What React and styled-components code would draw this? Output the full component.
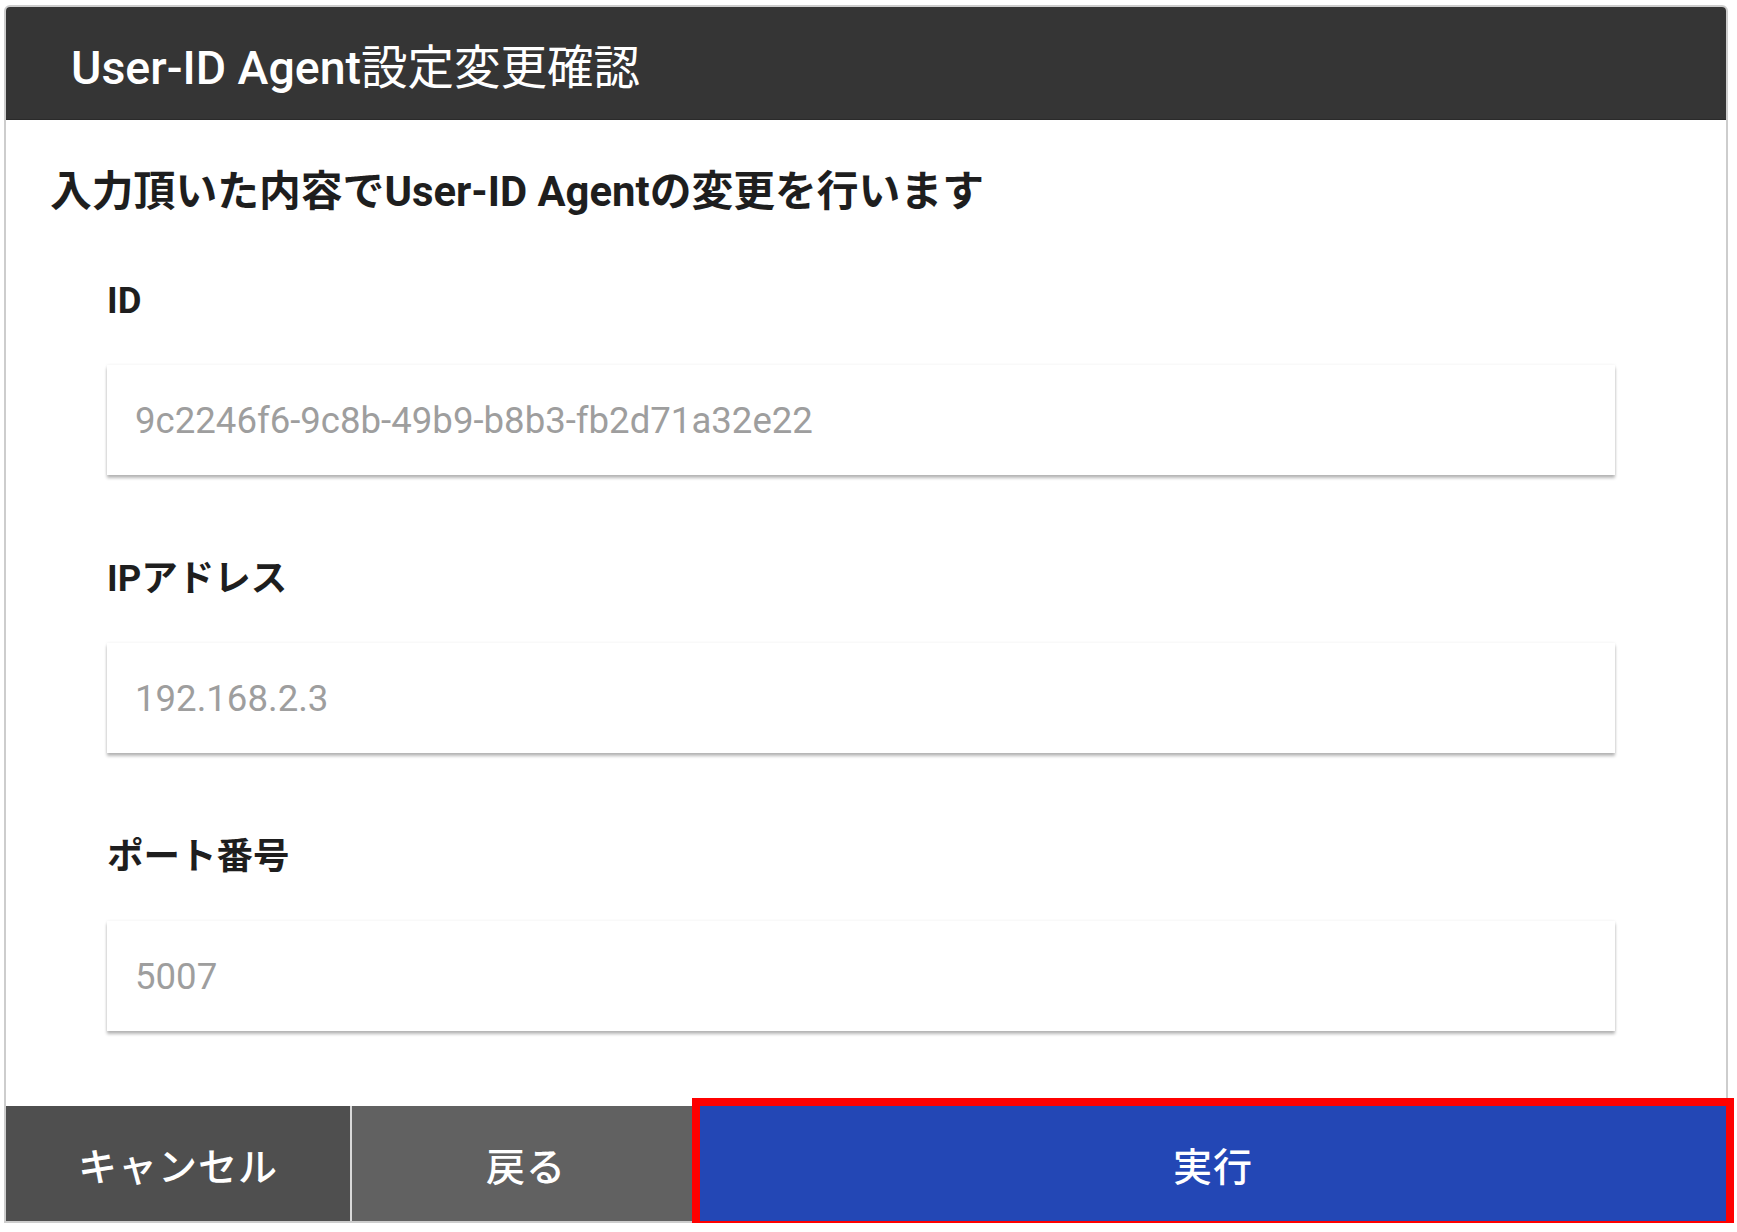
import React from "react";
import styled, { createGlobalStyle } from "styled-components";

const Global = createGlobalStyle`
  html, body {
    margin: 0;
    padding: 0;
    background: #ffffff;
  }
  body {
    font-family: Roboto, "Noto Sans CJK JP", "Noto Sans", sans-serif;
  }
  * { box-sizing: border-box; }
`;

const Frame = styled.div`
  margin: 5px 0 0 4px;
  width: 1724px;
  border: 2px solid #cdcdcd;
  border-radius: 6px 6px 0 0;
  display: flex;
  flex-direction: column;
  background: #ffffff;
`;

const Header = styled.header`
  height: 113px;
  background: #353535;
  border-radius: 4px 4px 0 0;
  display: flex;
  align-items: center;
  padding: 10px 0 0 65px;
  border-bottom: 1px solid #2a2a2a;
`;

const Title = styled.h1`
  margin: 0;
  color: #ffffff;
  font-size: 46.5px;
  font-weight: 400;
  line-height: 54px;
  letter-spacing: 0;
`;

const TitleLatin = styled.span`
  font-weight: 500;
`;

const Body = styled.main`
  height: 986px;
  display: flex;
  flex-direction: column;
  padding: 48px 111px 0 44px;
`;

const Lead = styled.p`
  margin: 0 0 63px 0;
  font-size: 41.8px;
  line-height: 48px;
  font-weight: 700;
  color: #1e1e1e;
`;

const Fields = styled.div`
  display: flex;
  flex-direction: column;
  gap: 82px;
  padding-left: 57px;
`;

const Field = styled.div`
  display: flex;
  flex-direction: column;
  gap: 42px;
`;

const Label = styled.div`
  font-size: 36.5px;
  line-height: 44px;
  font-weight: 700;
  color: #1e1e1e;
`;

const ValueBox = styled.div`
  height: 110px;
  background: #ffffff;
  display: flex;
  align-items: center;
  padding-left: 28px;
  font-size: 36.6px;
  color: #9e9e9e;
  box-shadow: 0 3px 3px rgba(0, 0, 0, 0.28), 0 0 3px rgba(0, 0, 0, 0.07);
`;

const Footer = styled.footer`
  height: 115px;
  display: flex;
  background: #ffffff;
`;

const FooterButton = styled.button`
  border: none;
  margin: 0;
  padding: 0;
  font-family: inherit;
  font-size: 39px;
  font-weight: 500;
  color: #ffffff;
  letter-spacing: 1px;
  display: flex;
  align-items: center;
  justify-content: center;
  cursor: pointer;
  width: ${(p) => (p.$width ? `${p.$width}px` : "auto")};
  flex: ${(p) => (p.$grow ? 1 : "none")};
  background: ${(p) => p.$bg};
  border-left: ${(p) => (p.$divider ? "2px solid #d9d9d9" : "none")};
  outline: ${(p) => (p.$highlight ? "8px solid #ff0000" : "none")};
  outline-offset: 0;
  position: relative;
`;

const fields = [
  { label: "ID", value: "9c2246f6-9c8b-49b9-b8b3-fb2d71a32e22" },
  { label: "IPアドレス", value: "192.168.2.3" },
  { label: "ポート番号", value: "5007" },
];

export default function App() {
  return (
    <>
      <Global />
      <Frame>
        <Header>
          <Title>
            <TitleLatin>User-ID Agent</TitleLatin>設定変更確認
          </Title>
        </Header>
        <Body>
          <Lead>入力頂いた内容でUser-ID Agentの変更を行います</Lead>
          <Fields>
            {fields.map((f) => (
              <Field key={f.label}>
                <Label>{f.label}</Label>
                <ValueBox>{f.value}</ValueBox>
              </Field>
            ))}
          </Fields>
        </Body>
        <Footer>
          <FooterButton $width={344} $bg="#4f4f4f">キャンセル</FooterButton>
          <FooterButton $width={350} $bg="#616161" $divider>戻る</FooterButton>
          <FooterButton $grow $bg="#2347b5" $highlight>実行</FooterButton>
        </Footer>
      </Frame>
    </>
  );
}
